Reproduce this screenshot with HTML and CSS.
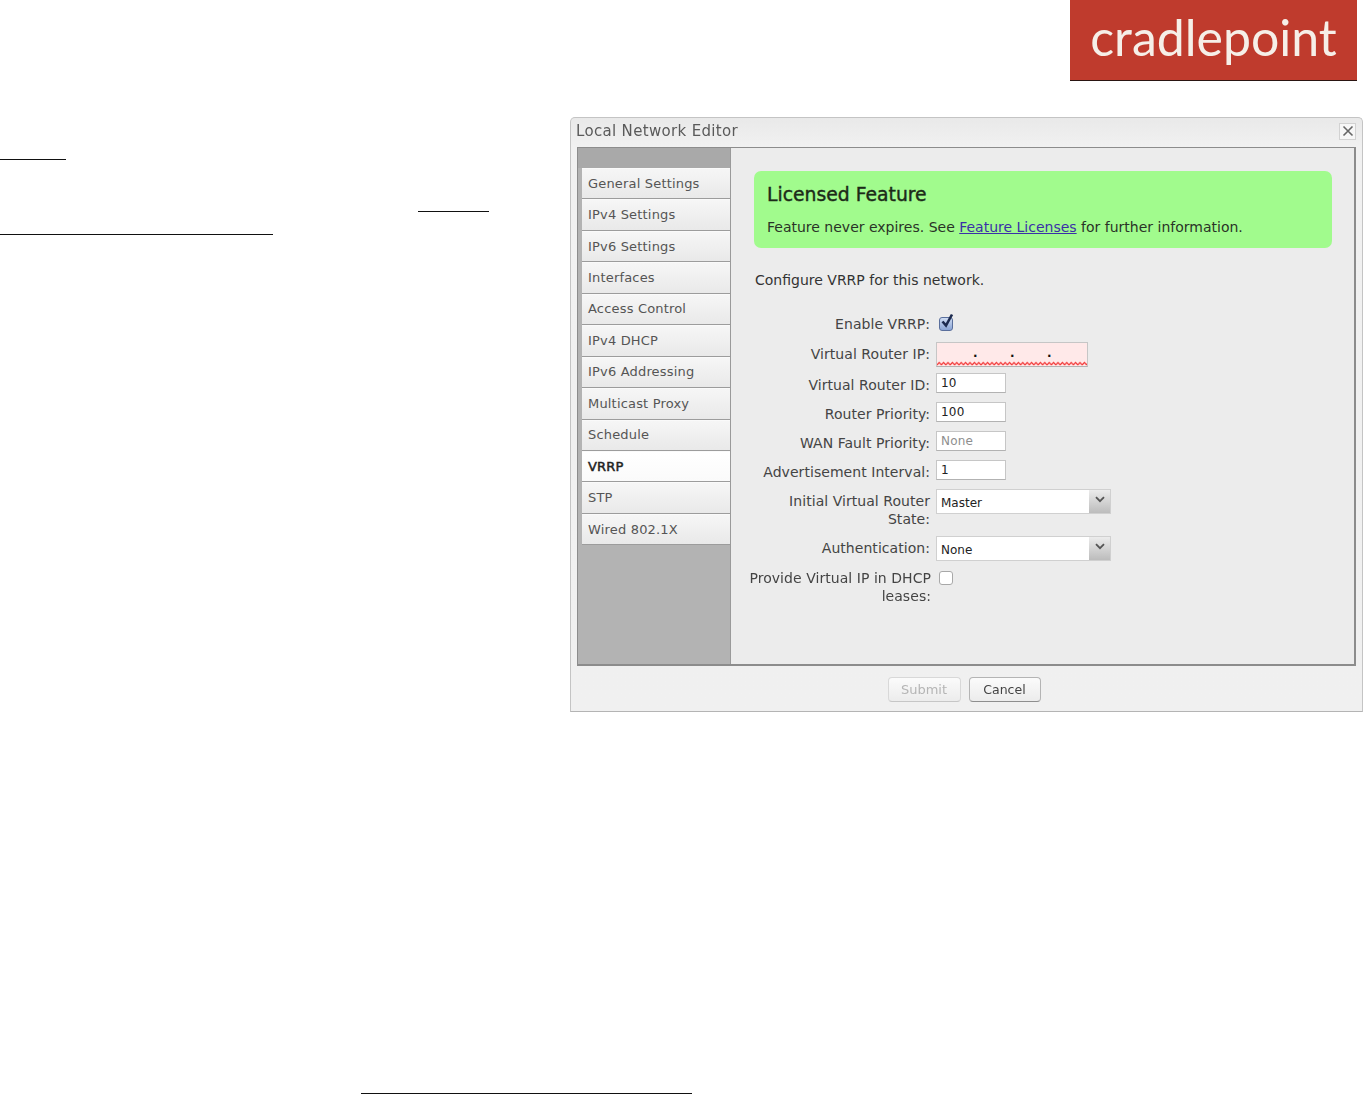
FILE: index.html
```html
<!DOCTYPE html>
<html lang="en">
<head>
<meta charset="utf-8">
<title>Local Network Editor</title>
<link rel="stylesheet" href="styles.css">
</head>
<body>
<div class="page">
  <header class="top">
    <div class="logo"><span class="logo-text">cradlepoint</span></div>
  </header>
  <main class="main">
    <div class="notes">
      <div class="rule rule-a"></div>
      <div class="rule rule-b"></div>
      <div class="rule rule-c"></div>
    </div>
    <section class="dialog">
      <div class="titlebar">
        <span class="title">Local Network Editor</span>
        <span class="close"><svg width="12" height="12" viewBox="0 0 12 12"><path d="M1.5 1.5l9 9M10.5 1.5l-9 9" stroke="#666" stroke-width="1.6" fill="none"/></svg></span>
      </div>
      <div class="panel">
        <nav class="side">
          <div class="side-head"></div>
          <div class="tab">General Settings</div>
          <div class="tab">IPv4 Settings</div>
          <div class="tab">IPv6 Settings</div>
          <div class="tab">Interfaces</div>
          <div class="tab">Access Control</div>
          <div class="tab">IPv4 DHCP</div>
          <div class="tab">IPv6 Addressing</div>
          <div class="tab">Multicast Proxy</div>
          <div class="tab">Schedule</div>
          <div class="tab tab-active">VRRP</div>
          <div class="tab">STP</div>
          <div class="tab">Wired 802.1X</div>
        </nav>
        <div class="content">
          <div class="notice">
            <h2 class="notice-title">Licensed Feature</h2>
            <p class="notice-text">Feature never expires. See <a class="link" href="#">Feature Licenses</a> for further information.</p>
          </div>
          <p class="intro">Configure VRRP for this network.</p>
          <div class="form">
            <div class="row row-enable">
              <div class="label">Enable VRRP:</div>
              <span class="check check-on"><svg class="tick" width="18" height="18" viewBox="0 0 18 18"><path d="M4.5 9.5l3.5 4 6-11" stroke="#1d2b4f" stroke-width="2.6" fill="none"/></svg></span>
            </div>
            <div class="row row-ip">
              <div class="label">Virtual Router IP:</div>
              <div class="field field-ip">
                <span class="octet"></span><span class="dot">.</span><span class="octet octet-mid"></span><span class="dot">.</span><span class="octet octet-mid"></span><span class="dot">.</span>
                <svg class="wave" width="150" height="5" viewBox="0 0 150 5"><defs><pattern id="zig" width="4.4" height="5" patternUnits="userSpaceOnUse"><path d="M0 4L2.2 1.4 4.4 4" stroke="#f23c3c" stroke-width="1.2" fill="none"/></pattern></defs><rect width="150" height="5" fill="url(#zig)"/></svg>
              </div>
            </div>
            <div class="row">
              <div class="label">Virtual Router ID:</div>
              <div class="field field-short">10</div>
            </div>
            <div class="row">
              <div class="label">Router Priority:</div>
              <div class="field field-short">100</div>
            </div>
            <div class="row">
              <div class="label">WAN Fault Priority:</div>
              <div class="field field-short field-muted">None</div>
            </div>
            <div class="row row-wide-gap">
              <div class="label">Advertisement Interval:</div>
              <div class="field field-short">1</div>
            </div>
            <div class="row row-wide-gap">
              <div class="label">Initial Virtual Router<br>State:</div>
              <div class="select"><span class="select-value">Master</span><span class="select-btn"><svg width="10" height="7" viewBox="0 0 10 7"><path d="M1 1.2l4 4 4-4" stroke="#555" stroke-width="1.8" fill="none"/></svg></span></div>
            </div>
            <div class="row">
              <div class="label">Authentication:</div>
              <div class="select"><span class="select-value">None</span><span class="select-btn"><svg width="10" height="7" viewBox="0 0 10 7"><path d="M1 1.2l4 4 4-4" stroke="#555" stroke-width="1.8" fill="none"/></svg></span></div>
            </div>
            <div class="row row-dhcp">
              <div class="label label-dhcp">Provide Virtual IP in DHCP<br>leases:</div>
              <span class="check"></span>
            </div>
          </div>
        </div>
      </div>
      <footer class="actions">
        <span class="btn btn-off">Submit</span>
        <span class="btn btn-cancel">Cancel</span>
      </footer>
    </section>
  </main>
  <div class="rule rule-d"></div>
</div>
</body>
</html>
```
FILE: styles.css
```css
* { box-sizing: border-box; }
html, body { margin: 0; padding: 0; background: #fff; }
body { font-family: "DejaVu Sans", Verdana, sans-serif; }
.page { width: 1364px; height: 1094px; overflow: hidden; }

.top { display: flex; justify-content: flex-end; padding-right: 7px; height: 81px; }
.logo {
  width: 287px; height: 81px; background: #bf3b2d; border-bottom: 1px solid #2a1512;
  display: flex; justify-content: center; overflow: hidden;
}
.logo-text {
  font-family: "Lato", sans-serif; font-weight: 400; font-size: 50px; line-height: 75px;
  color: #f6efe8; letter-spacing: 0;
}

.main { display: flex; margin-top: 36px; }
.notes { width: 570px; flex: none; padding-top: 42px; }
.rule { height: 1px; background: #111; }
.rule-a { width: 66px; }
.rule-b { width: 71px; margin-left: 418px; margin-top: 51px; }
.rule-c { width: 273px; margin-top: 22px; }
.rule-d { width: 331px; margin-left: 361px; margin-top: 381px; }

.dialog {
  width: 793px; height: 595px; flex: none; display: flex; flex-direction: column;
  background: linear-gradient(#e9e9e9, #f1f1f1 5%, #f0f0f0);
  border: 1px solid #c4c4c4; border-bottom-color: #b4b4b4; border-radius: 5px 5px 0 0;
  filter: blur(0.5px);
}
.titlebar {
  height: 29px; flex: none; display: flex; justify-content: space-between; align-items: center;
  padding: 0 6px 3px 5px;
}
.title { font-size: 15px; color: #5a5a5a; letter-spacing: .33px; }
.close {
  width: 17px; height: 17px; display: flex; align-items: center; justify-content: center;
  background: #f7f7f7; border: 1px solid #d2d2d2;
}

.panel {
  height: 519px; flex: none; margin: 0 6px; display: flex;
  border: 1px solid #8c8c8c; border-width: 1px 2px 2px 1px;
}
.side { width: 153px; flex: none; background: #b3b3b3; padding-left: 4px; border-right: 1px solid #9a9a9a; }
.side-head { height: 20px; background: #a9a9a9; margin-left: -4px; }
.tab {
  height: 31.45px; padding: 0 0 1px 6px; display: flex; align-items: center;
  font-size: 13px; color: #555; letter-spacing: .18px;
  background: linear-gradient(#f6f6f6, #e9e9e9);
  border-bottom: 1px solid #9c9c9c; border-top: 1px solid #fafafa;
}
.tab-active { background: linear-gradient(#fff, #fafafa); color: #222; -webkit-text-stroke: .5px #222; }

.content { flex: 1; min-width: 0; background: #ececec; padding: 23px 23px 0 23px; }
.notice {
  width: 578px; height: 77px; background: #a1fb8d; border-radius: 7px;
  padding: 12px 13px 0;
}
.notice-title { margin: 0; font-size: 18.8px; line-height: 24px; font-weight: 400; color: #1c2a18; -webkit-text-stroke: .4px #1c2a18; }
.notice-text { margin: 11px 0 0; font-size: 14px; line-height: 18px; color: #2a3327; }
.link { color: #3a30a8; text-decoration: underline; }
.intro { margin: 23px 0 0 1px; font-size: 14px; line-height: 18px; color: #333; }

.form { display: flex; flex-direction: column; gap: 9px; margin: 25px 0 0 -9px; }
.row { display: flex; align-items: flex-start; gap: 6px; }
.row-enable { height: 19px; }
.row-ip { margin-bottom: -3px; }
.row-dhcp { margin-top: -1px; }
.label {
  width: 185px; flex: none; text-align: right; font-size: 14px; line-height: 18px;
  letter-spacing: .05px; color: #444; padding-top: 3px; margin-bottom: -1px;
}
.label-dhcp { margin-top: -3px; margin-right: -1px; width: 186px; }
.row-enable .label { padding-top: 1px; }

.check {
  width: 14px; height: 14px; margin: 2px 0 0 3px; position: relative;
  background: #fff; border: 1px solid #a8a8a8; border-radius: 3px;
}
.check-on { margin-top: 3px; background: linear-gradient(#cfdcf2, #8aa4d4); border-color: #5a6f9c; }
.tick { position: absolute; left: -2px; top: -6px; }

.field {
  height: 20px; background: #fff; border: 1px solid #c6c6c6; border-bottom-color: #b2b2b2;
  font-size: 12px; line-height: 19px; padding-left: 4px; color: #222; letter-spacing: .2px;
}
.field-short { width: 70px; }
.field-muted { color: #8e8e8e; }
.field-ip {
  width: 152px; height: 25px; background: #ffe9e9; position: relative; display: flex;
  padding-left: 0; line-height: 21px; color: #111; font-weight: 700;
}
.octet { width: 36px; }
.octet-mid { width: 34px; }
.dot { width: 3px; text-align: center; }
.wave { position: absolute; left: 0; bottom: 0; }

.select {
  width: 175px; height: 25px; display: flex; background: #fff;
  border: 1px solid #d0d0d0; font-size: 12px; color: #222; line-height: 26px;
}
.select-value { flex: 1; padding-left: 4px; }
.select-btn {
  width: 21px; flex: none; display: flex; justify-content: center; padding-top: 6px;
  background: linear-gradient(#ececec, #bcbcbc);
}

.actions { flex: 1; display: flex; justify-content: center; gap: 8px; padding: 11px 5px 0 0; }
.btn {
  width: 73px; height: 25px; text-align: center; font-size: 13px; line-height: 24px; color: #444;
  background: linear-gradient(#fbfbfb, #ececec); border: 1px solid #b4b4b4; border-bottom-color: #8e8e8e; border-radius: 4px;
}
.btn-cancel { width: 72px; font-size: 12.5px; }
.btn-off { color: #b5b5b5; border-color: #d8d8d8; border-bottom-color: #c6c6c6; }
```
